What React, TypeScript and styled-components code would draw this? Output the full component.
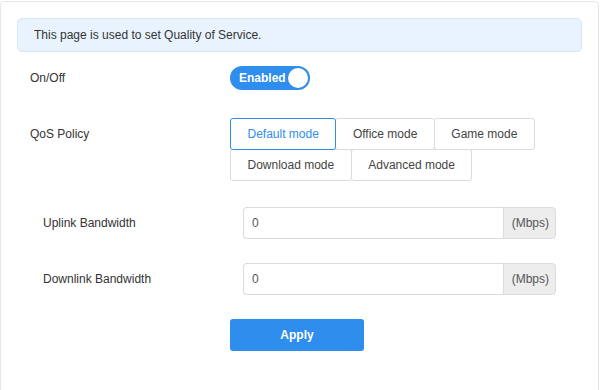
import {useState} from "react";
import styled, {createGlobalStyle} from "styled-components";

const GlobalStyle = createGlobalStyle`
    html, body {
        margin: 0;
        padding: 0;
        background: #fff;
        font-family: "Liberation Sans", Arial, sans-serif;
        font-size: 12px;
        color: #333;
    }
`;

const BLUE = "#2e8ded";

const Styled = {
    Card: styled.div`
        margin-top: 1px;
        width: 599px;
        height: 400px;
        border: 1px solid #e6e6e6;
        border-radius: 4px;
        padding: 16px;
        box-sizing: border-box;
    `,
    Notice: styled.div`
        height: 34px;
        box-sizing: border-box;
        border: 1px solid #d5e7f8;
        background: #e8f3fd;
        border-radius: 5px;
        padding: 0 16px;
        line-height: 32px;
        color: #333;
    `,
    Form: styled.div`
        padding: 0 13px;
        margin-top: 14px;
    `,
    Row: styled.div<{ $gap?: number; $indent?: number }>`
        display: grid;
        grid-template-columns: 200px 1fr;
        margin-top: ${p => p.$gap ?? 0}px;
        padding-left: ${p => p.$indent ?? 0}px;
    `,
    Label: styled.div<{ $lh: number }>`
        line-height: ${p => p.$lh}px;
        color: #333;
    `,
    Toggle: styled.button`
        position: relative;
        width: 80px;
        height: 24px;
        border: none;
        border-radius: 12px;
        background: ${BLUE};
        color: #fff;
        font-family: inherit;
        font-size: 12px;
        font-weight: bold;
        text-align: left;
        padding: 0 0 0 9px;
        cursor: pointer;
    `,
    Knob: styled.span`
        position: absolute;
        right: 2px;
        top: 2px;
        width: 20px;
        height: 20px;
        border-radius: 50%;
        background: #fff;
    `,
    Modes: styled.div`
        display: flex;
        flex-wrap: wrap;
        width: 320px;
        padding-left: 1px;
    `,
    Mode: styled.button<{ $active: boolean }>`
        position: relative;
        height: 32px;
        padding: 0 16.5px;
        margin: 0 0 -1px -1px;
        border: 1px solid ${p => (p.$active ? BLUE : "#dcdcdc")};
        z-index: ${p => (p.$active ? 1 : 0)};
        border-radius: 3px;
        background: #fff;
        color: ${p => (p.$active ? BLUE : "#444")};
        font-family: inherit;
        font-size: 12px;
        cursor: pointer;
    `,
    InputGroup: styled.div`
        display: flex;
        width: 313px;
        height: 32px;
    `,
    Input: styled.input`
        flex: 1;
        min-width: 0;
        box-sizing: border-box;
        height: 32px;
        border: 1px solid #dcdcdc;
        border-right: none;
        border-radius: 4px 0 0 4px;
        padding: 0 8px;
        font-family: inherit;
        font-size: 12px;
        color: #555;
        outline: none;
    `,
    Addon: styled.span`
        width: 53px;
        box-sizing: border-box;
        border: 1px solid #dcdcdc;
        border-radius: 0 4px 4px 0;
        background: #ededed;
        color: #555;
        line-height: 30px;
        text-align: right;
        padding-right: 6px;
    `,
    Apply: styled.button`
        width: 134px;
        height: 32px;
        border: none;
        border-radius: 3px;
        background: ${BLUE};
        color: #fff;
        font-family: inherit;
        font-size: 12px;
        font-weight: bold;
        cursor: pointer;
    `
};

const MODES = ["Default mode", "Office mode", "Game mode", "Download mode", "Advanced mode"];

const App = () => {
    const [mode, setMode] = useState("Default mode");
    const [uplink, setUplink] = useState("0");
    const [downlink, setDownlink] = useState("0");

    return (
        <>
            <GlobalStyle/>
            <Styled.Card>
                <Styled.Notice>This page is used to set Quality of Service.</Styled.Notice>
                <Styled.Form>
                    <Styled.Row>
                        <Styled.Label $lh={24}>On/Off</Styled.Label>
                        <div>
                            <Styled.Toggle>
                                Enabled
                                <Styled.Knob/>
                            </Styled.Toggle>
                        </div>
                    </Styled.Row>
                    <Styled.Row $gap={28}>
                        <Styled.Label $lh={32}>QoS Policy</Styled.Label>
                        <Styled.Modes>
                            {MODES.map(m => (
                                <Styled.Mode key={m} $active={m === mode} onClick={() => setMode(m)}>
                                    {m}
                                </Styled.Mode>
                            ))}
                        </Styled.Modes>
                    </Styled.Row>
                    <Styled.Row $gap={27} $indent={13}>
                        <Styled.Label $lh={32}>Uplink Bandwidth</Styled.Label>
                        <Styled.InputGroup>
                            <Styled.Input value={uplink} onChange={e => setUplink(e.target.value)}/>
                            <Styled.Addon>(Mbps)</Styled.Addon>
                        </Styled.InputGroup>
                    </Styled.Row>
                    <Styled.Row $gap={24} $indent={13}>
                        <Styled.Label $lh={32}>Downlink Bandwidth</Styled.Label>
                        <Styled.InputGroup>
                            <Styled.Input value={downlink} onChange={e => setDownlink(e.target.value)}/>
                            <Styled.Addon>(Mbps)</Styled.Addon>
                        </Styled.InputGroup>
                    </Styled.Row>
                    <Styled.Row $gap={24}>
                        <div/>
                        <div>
                            <Styled.Apply>Apply</Styled.Apply>
                        </div>
                    </Styled.Row>
                </Styled.Form>
            </Styled.Card>
        </>
    );
};

export default App;
